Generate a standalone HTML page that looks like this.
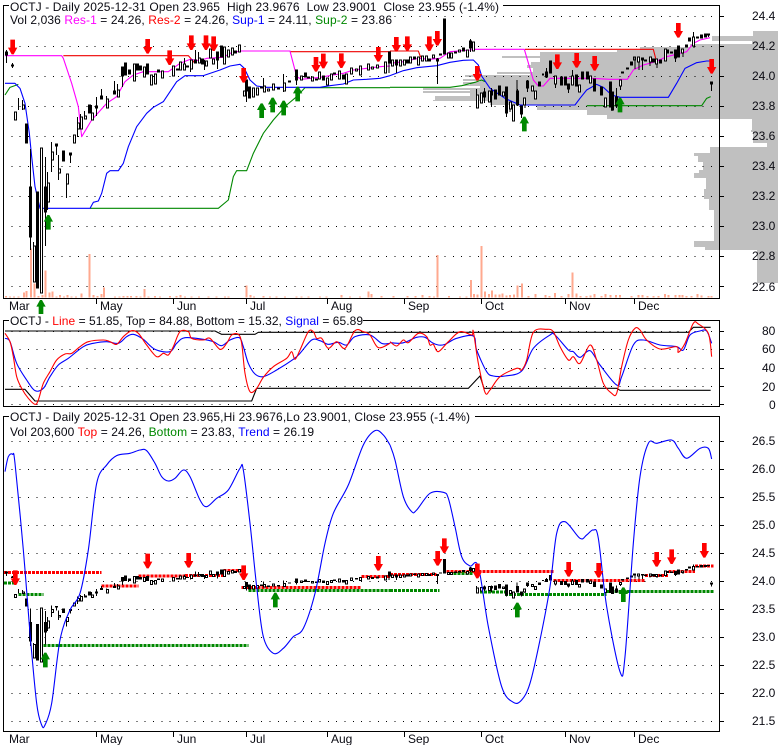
<!DOCTYPE html>
<html><head><meta charset="utf-8"><title>OCTJ</title>
<style>html,body{margin:0;padding:0;background:#fff;width:780px;height:745px;overflow:hidden}
svg{display:block}
text{font-family:"Liberation Sans",Arial,sans-serif;font-size:12px;fill:#0a0a12;white-space:pre}
.d{stroke:#000;stroke-width:1;stroke-dasharray:1 7.33;fill:none}
.l{fill:none;stroke-width:3.3;stroke-linejoin:round}
.ds{fill:none;stroke-width:9;stroke-dasharray:9 3}
.c{vector-effect:non-scaling-stroke}
</style></head><body>
<svg width="780" height="745" viewBox="0 0 780 745" xmlns="http://www.w3.org/2000/svg">
<defs>
<path id="dn" d="M-3 0H3L14 -20H7V-44H-7V-20H-14Z" fill="#f00"/>
<path id="up" d="M-3 0H3L14 20H7V44H-7V20H-14Z" fill="#080"/>
<g id="candles" shape-rendering="crispEdges">
<path class="c" fill="#000" stroke="#000" stroke-width="1" d="M5.5 52h2V55h-2zM6.5 50V63M11.5 65h2V66h-2zM12.5 63V68M25.5 124h2V143h-2zM29.5 187h2V237h-2zM30.5 149V250M36.5 192h2V288h-2zM44.5 187h2V212h-2zM45.5 157V246M55.5 144h2V146h-2zM56.5 144V155M62.5 151h2V161h-2zM69.5 153h2V155h-2zM70.5 153V163M88.5 105h2V113h-2zM95.5 106h2V108h-2zM96.5 97V116M100.5 96h2V99h-2zM101.5 89V99M113.5 91h2V94h-2zM114.5 81V94M121.5 67h2V76h-2zM122.5 67V87M124.5 63h2V75h-2zM128.5 70h2V74h-2zM136.5 64h2V70h-2zM139.5 66h2V70h-2zM146.5 64h2V74h-2zM157.5 70h2V72h-2zM176.5 69h2V70h-2zM186.5 66h2V67h-2zM194.5 60h2V63h-2zM195.5 50V63M201.5 59h2V64h-2zM216.5 52h2V60h-2zM217.5 52V69M220.5 46h2V57h-2zM234.5 51h2V53h-2zM245.5 80h2V91h-2zM246.5 80V102M248.5 87h2V98h-2zM260.5 87h2V88h-2zM277.5 88h2V89h-2zM288.5 81h2V82h-2zM295.5 70h2V80h-2zM296.5 70V85M304.5 73h2V77h-2zM307.5 77h2V78h-2zM315.5 79h2V80h-2zM322.5 76h2V80h-2zM333.5 73h2V74h-2zM342.5 75h2V79h-2zM388.5 52h2V63h-2zM395.5 60h2V65h-2zM396.5 60V73M406.5 60h2V63h-2zM413.5 57h2V59h-2zM428.5 59h2V61h-2zM436.5 59h2V61h-2zM437.5 58V84M439.5 54h2V55h-2zM443.5 19h2V54h-2zM454.5 52h2V53h-2zM462.5 48h2V51h-2zM469.5 41h2V48h-2zM470.5 39V52M483.5 92h2V97h-2zM484.5 88V103M490.5 91h2V95h-2zM491.5 88V107M494.5 90h2V99h-2zM498.5 86h2V95h-2zM505.5 87h2V113h-2zM506.5 87V117M516.5 91h2V105h-2zM517.5 89V106M520.5 106h2V114h-2zM521.5 106V118M526.5 81h2V88h-2zM527.5 80V92M538.5 82h2V86h-2zM542.5 74h1V75h-1zM545.5 72h2V77h-2zM546.5 68V78M549.5 61h2V73h-2zM560.5 77h2V85h-2zM564.5 77h2V85h-2zM567.5 84h2V89h-2zM568.5 84V93M575.5 75h2V86h-2zM581.5 72h2V79h-2zM586.5 72h2V79h-2zM593.5 79h2V91h-2zM600.5 87h2V95h-2zM609.5 82h2V107h-2zM611.5 92h2V110h-2zM615.5 97h2V106h-2zM616.5 88V108M621.5 72h2V73h-2zM626.5 68h2V69h-2zM630.5 62h2V65h-2zM641.5 58h2V60h-2zM642.5 58V70M644.5 60h2V61h-2zM652.5 59h2V62h-2zM659.5 60h2V63h-2zM666.5 50h2V53h-2zM670.5 52h2V53h-2zM674.5 50h2V58h-2zM675.5 50V62M677.5 46h2V57h-2zM685.5 45h2V47h-2zM688.5 38h2V41h-2zM696.5 37h2V38h-2zM700.5 35h2V38h-2zM704.5 34h2V37h-2zM708.5 34V37M707.5 34h2V35h-2zM710.5 82h2V84h-2zM711.5 82V91"/>
<path class="c" fill="none" stroke="#000" stroke-width="1" d="M22.5 100V110M18.5 98V110M33.5 242V246M47.5 172V183M47.5 202V210M51.5 142V152M51.5 160V172M58.5 155V169M58.5 173V180M66.5 184V198M77.5 117V123M77.5 129V137M80.5 114V117M84.5 111V116M91.5 105V113M106.5 96V99M117.5 84V90M154.5 74V84M184.5 58V70M190.5 64V72M198.5 52V58M204.5 60V70M263.5 78V86M283.5 74V83M283.5 91V92M389 52V73"/>
<path class="c" fill="#fff" stroke="#000" stroke-width="1" d="M14.5 112h2V120h-2zM22.5 105h2V109h-2zM33.5 246h2V282h-2zM40.5 148h2V293h-2zM47.5 183h2V202h-2zM51.5 152h2V160h-2zM58.5 169h2V173h-2zM66.5 174h2V184h-2zM73.5 135h2V143h-2zM77.5 123h2V129h-2zM80.5 117h2V129h-2zM84.5 116h2V119h-2zM91.5 113h2V120h-2zM106.5 99h2V108h-2zM117.5 90h2V97h-2zM133.5 64h2V81h-2zM143.5 67h2V77h-2zM150.5 75h2V85h-2zM154.5 74h2V84h-2zM161.5 71h2V78h-2zM172.5 66h2V76h-2zM179.5 62h2V70h-2zM183.5 64h2V70h-2zM190.5 60h2V69h-2zM198.5 58h2V63h-2zM205.5 61h2V66h-2zM209.5 49h2V58h-2zM212.5 59h2V64h-2zM223.5 47h2V64h-2zM227.5 50h2V57h-2zM231.5 48h2V55h-2zM238.5 45h2V52h-2zM243.5 91h2V96h-2zM252.5 88h2V97h-2zM256.5 88h2V95h-2zM263.5 86h2V92h-2zM267.5 89h2V91h-2zM272.5 84h2V90h-2zM283.5 83h2V91h-2zM300.5 76h2V80h-2zM311.5 77h2V81h-2zM318.5 72h2V79h-2zM326.5 78h2V85h-2zM330.5 74h2V80h-2zM338.5 71h2V79h-2zM345.5 74h2V84h-2zM350.5 68h2V74h-2zM355.5 69h2V71h-2zM359.5 66h2V75h-2zM367.5 64h2V70h-2zM371.5 67h2V69h-2zM376.5 65h2V68h-2zM384.5 62h2V73h-2zM391.5 60h2V66h-2zM399.5 60h2V66h-2zM403.5 60h2V65h-2zM409.5 57h2V63h-2zM417.5 57h2V65h-2zM421.5 56h2V61h-2zM425.5 56h2V61h-2zM432.5 55h2V58h-2zM447.5 53h2V58h-2zM450.5 53h2V58h-2zM458.5 50h2V52h-2zM466.5 50h2V57h-2zM472.5 42h2V51h-2zM476.5 95h2V108h-2zM480.5 93h2V103h-2zM488.5 91h2V102h-2zM502.5 92h2V96h-2zM509.5 102h2V109h-2zM512.5 105h2V121h-2zM523.5 98h2V105h-2zM531.5 86h2V91h-2zM534.5 91h2V99h-2zM554.5 76h2V84h-2zM571.5 76h2V85h-2zM578.5 85h2V92h-2zM589.5 76h2V83h-2zM604.5 98h2V107h-2zM619.5 80h2V86h-2zM633.5 57h2V60h-2zM637.5 57h2V62h-2zM649.5 57h2V62h-2zM655.5 59h2V64h-2zM664.5 49h2V61h-2zM681.5 49h2V53h-2zM692.5 37h2V46h-2z"/>
<path class="c" fill="none" stroke="#000" stroke-width="1" d="M476.5 89V95M555.5 84V88M572.5 70V76M620.5 86V90M635 57V69M639 62V70M650 62V66M657 64V68M683 53V57M693.5 32V37M694 46V48M612 110V111M525 105V108M510 109V112M517 80V91"/>
</g>
</defs>

<!-- CHART 1 profile -->
<g fill="#c0c0c0" shape-rendering="crispEdges">
<rect x="753" y="31" width="25" height="5"/><rect x="712" y="36" width="66" height="5"/><rect x="752" y="41" width="26" height="3"/><rect x="690" y="44" width="88" height="3"/><rect x="640" y="47" width="138" height="3"/><rect x="617" y="50" width="161" height="2"/><rect x="540" y="52" width="238" height="4"/><rect x="502" y="56" width="276" height="2"/><rect x="540" y="58" width="238" height="4"/><rect x="531" y="62" width="247" height="3"/><rect x="527" y="65" width="251" height="3"/><rect x="533" y="68" width="245" height="4"/><rect x="497" y="72" width="281" height="2"/><rect x="530" y="74" width="248" height="1"/><rect x="465" y="75" width="313" height="2"/><rect x="480" y="77" width="298" height="2"/><rect x="463" y="79" width="315" height="2"/><rect x="480" y="81" width="298" height="1"/><rect x="463" y="82" width="315" height="2"/><rect x="470" y="84" width="308" height="1"/><rect x="463" y="85" width="315" height="1"/><rect x="480" y="86" width="298" height="2"/><rect x="423" y="88" width="355" height="2"/><rect x="470" y="90" width="308" height="1"/><rect x="423" y="91" width="355" height="2"/><rect x="470" y="93" width="308" height="3"/><rect x="435" y="96" width="343" height="4"/><rect x="433" y="100" width="345" height="1"/><rect x="490" y="101" width="288" height="4"/><rect x="537" y="105" width="241" height="5"/><rect x="587" y="110" width="191" height="5"/><rect x="607" y="115" width="171" height="4"/>
<rect x="752" y="119" width="26" height="11"/><rect x="751" y="130" width="27" height="2"/><rect x="753" y="132" width="25" height="11"/><rect x="767" y="143" width="11" height="4"/>
<rect x="710" y="147" width="68" height="6"/><rect x="694" y="153" width="84" height="3"/><rect x="698" y="156" width="80" height="6"/><rect x="703" y="162" width="75" height="8"/><rect x="699" y="170" width="79" height="3"/><rect x="694" y="173" width="84" height="5"/><rect x="706" y="178" width="72" height="11"/><rect x="704" y="189" width="74" height="10"/><rect x="709" y="199" width="69" height="11"/><rect x="714" y="210" width="64" height="31"/><rect x="694" y="241" width="84" height="6"/><rect x="705" y="247" width="73" height="3"/><rect x="757" y="250" width="21" height="33"/>
</g>
<g class="d" shape-rendering="crispEdges">
<path d="M3 16.5H720M3 46.5H720M3 76.5H720M3 106.5H720M3 136.5H720M3 166.5H720M3 196.5H720M3 226.5H720M3 256.5H720M3 286.5H720M3 331.5H720M3 349.5H720M3 368.5H720M3 386.5H720M3 404.5H720M3 441.5H720M3 469.5H720M3 497.5H720M3 525.5H720M3 553.5H720M3 581.5H720M3 609.5H720M3 637.5H720M3 665.5H720M3 693.5H720M3 721.5H720"/>
</g>
<!-- volume -->
<g transform="scale(.33333)" fill="none" stroke="#ffa98f" stroke-width="6" shape-rendering="crispEdges">
<path d="M18 888V893M30 890V893M42 890V893M55 890V893M72 878V893M80 873V893M93 745V893M103 850V893M115 888V893M127 885V893M137 812V893M148 878V893M158 875V893M170 890V893M180 885V893M192 890V893M203 885V893M215 890V893M228 890V893M245 880V893M268 762V893M280 885V893M293 888V893M305 882V893M312 862V893M345 890V893M358 890V893M370 888V893M382 888V893M393 888V893M410 888V893M422 890V893M434 867V893M445 890V893M465 888V893M480 890V893M510 888V893M530 888V893M542 885V893M555 890V893M575 890V893M597 890V893M625 890V893M650 890V893M675 890V893M685 890V893M740 857V893M752 885V893M762 890V893M790 888V893M810 890V893M830 890V893M855 890V893M890 890V893M905 890V893M925 890V893M960 890V893M980 890V893M1025 885V893M1050 890V893M1080 890V893M1105 875V893M1115 882V893M1145 888V893"/>
</g>
<g transform="translate(390,0) scale(.33333)" fill="none" stroke="#ffa98f" stroke-width="6" shape-rendering="crispEdges">
<path d="M10 888V893M52 888V893M77 888V893M98 885V893M118 888V893M132 890V893M143 765V893M177 888V893M210 890V893M230 890V893M243 840V893M252 882V893M262 884V893M275 738V893M285 875V893M297 882V893M306 872V893M317 884V893M328 884V893M338 880V893M350 887V893M360 885V893M372 883V893M383 857V893M396 850V893M415 888V893M437 882V893M466 885V893M478 888V893M495 879V893M515 888V893M536 882V893M548 817V893M560 880V893M572 888V893M590 888V893M602 886V893M614 882V893M635 888V893M647 882V893M662 885V893M678 885V893M690 885V893M725 888V893M745 885V893M758 885V893M772 888V893M790 888V893M805 888V893M825 882V893M835 885V893M857 885V893M868 885V893M878 885V893M890 888V893M905 888V893M923 882V893M935 887V893M955 888V893M965 888V893"/>
</g>
<!-- lines chart 1 left -->
<g transform="scale(.33333)">
<path class="l" stroke="#e00" d="M190 167H565L585 190"/>
<path class="l" stroke="#e00" d="M870 155H1170"/>
<path class="l" stroke="#f0f" d="M15 167H185L190 175L215 250L235 320L245 410L275 360L320 310L350 290L375 245L400 225L430 215H505L540 190L570 178L600 182L620 175L670 172L690 160L720 153H870L890 230L905 238L960 232L1000 225L1030 220L1060 210L1100 205L1140 200L1170 198"/>
<path class="l" stroke="#080" d="M15 285L30 262L55 253M270 625H655L685 600L700 530L710 512H740L760 460L790 400L820 360L860 315L890 290L915 263H1170"/>
<path class="l" stroke="#00f" d="M15 250H45L60 265L75 310L88 400L95 470L105 560L120 625H270L280 607L295 603L305 580L320 520L330 512H355L370 490L385 440L410 380L440 340L460 322L490 305L530 245L555 227H610L660 210L690 198L720 193L733 205L750 240L770 258L800 262H960L990 257L1030 252L1060 240L1100 238L1140 235L1170 227"/>
</g>
<g transform="translate(390,0) scale(.33333)">
<path class="l" stroke="#e00" d="M0 153H85L92 172M405 148H790L797 175"/>
<path class="l" stroke="#f0f" d="M0 190L40 185L85 175L120 178L150 175L180 155L240 150L255 148H403L430 240L445 258H460L480 235H600L660 238H712L730 210L760 195L797 185L830 170L890 155L910 130L930 120L960 113"/>
<path class="l" stroke="#080" d="M0 262H180L215 257L255 247L275 240L285 245M590 317H935L950 295L962 290"/>
<path class="l" stroke="#00f" d="M0 227L40 212L80 203L140 197L180 187L220 181L250 180L265 195L275 228L300 265L345 295L390 315H555L570 295L590 270L620 253L640 262L665 285L690 292H835L860 250L885 205L920 188L950 183H965"/>
</g>
<use href="#candles"/>
<!-- arrows chart 1 -->
<g transform="scale(.33333)">
<use href="#dn" x="38" y="163"/><use href="#dn" x="443" y="161"/><use href="#dn" x="509" y="195"/><use href="#dn" x="574" y="150"/><use href="#dn" x="618" y="150"/><use href="#dn" x="641" y="153"/><use href="#dn" x="731" y="248"/><use href="#dn" x="948" y="215"/><use href="#dn" x="970" y="205"/><use href="#dn" x="1024" y="204"/><use href="#dn" x="1135" y="185"/>
<use href="#up" x="145" y="645"/><use href="#up" x="785" y="310"/><use href="#up" x="818" y="293"/><use href="#up" x="851" y="302"/><use href="#up" x="893" y="260"/><use href="#up" x="123" y="900"/>
</g>
<g transform="translate(390,0) scale(.33333)">
<use href="#dn" x="19" y="155"/><use href="#dn" x="52" y="153"/><use href="#dn" x="118" y="153"/><use href="#dn" x="142" y="137"/><use href="#dn" x="262" y="242"/><use href="#dn" x="502" y="207"/><use href="#dn" x="560" y="203"/><use href="#dn" x="614" y="212"/><use href="#dn" x="865" y="113"/><use href="#dn" x="965" y="221"/>
<use href="#up" x="403" y="350"/><use href="#up" x="690" y="293"/>
</g>

<!-- CHART 2 lines -->
<g transform="translate(0,300) scale(.33333)">
<path class="l" stroke="#000" d="M15 93H645L665 103H765L775 97H1170M15 268H75L105 303H755L770 265H1170"/>
<path class="l s" stroke="#00f" d="M15 115L30 125L50 190L80 240L105 272L130 265L150 230L175 195L205 175L250 140L280 130L320 125L355 130L380 110L400 103L430 118L465 148L510 155L530 130L555 113L610 118L640 125L665 137L690 120L718 113L730 140L745 190L765 222L790 230L830 210L880 178L900 160L935 120L960 122L985 133L1015 127L1040 135L1065 110L1110 105L1145 130L1170 130"/>
<path class="l s" stroke="#f00" d="M15 100L30 125L40 170L50 230L65 265L85 295L105 313L115 300L130 250L150 215L170 180L195 162L215 160L240 140L265 125L310 120L330 125L350 133L370 110L395 92L415 100L440 135L470 170L490 160L505 165L520 140L540 95L565 95L575 115L610 120L630 115L660 148L680 130L695 105L715 103L725 130L735 220L750 275L770 265L790 232L820 200L860 175L875 155L885 178L900 150L925 95L940 95L950 115L965 115L985 145L1010 125L1035 145L1065 92L1090 95L1110 105L1135 143L1170 130"/>
</g>
<g transform="translate(390,300) scale(.33333)">
<path class="l" stroke="#000" d="M0 97H895L910 82H962M0 265H235L270 228L282 265H680L690 271H962"/>
<path class="l s" stroke="#00f" d="M0 128L30 130L50 125L80 112L105 112L125 127L145 135L165 133L200 115L250 108L260 150L290 215L310 228L345 228L395 213L430 145L480 105L495 105L535 150L550 155L570 172L600 152L630 195L680 255L695 230L730 135L760 120L810 135L860 140L880 150L900 105L930 93L950 93L965 130"/>
<path class="l s" stroke="#f00" d="M0 125L20 138L40 120L55 128L85 100L110 110L120 135L130 133L145 155L175 125L210 95L245 105L250 95L265 190L285 277L300 270L330 230L380 205L395 210L410 180L430 97L470 88L490 95L510 140L535 180L550 170L570 190L600 135L620 180L640 250L665 280L680 280L695 200L715 120L735 85L750 90L770 120L810 147L860 140L865 157L885 130L910 70L925 72L955 100L965 170"/>
</g>

<!-- CHART 3 -->
<g transform="translate(0,410) scale(.33333)" shape-rendering="crispEdges">
<path class="ds" stroke="#f00" d="M12 487H305M305 528H415M415 498H555M555 496H670M670 481H725M725 533H1085M1085 500H1170"/>
<path class="ds" stroke="#080" d="M12 519H50M55 553H130M130 706H745M745 541H1170"/>
</g>
<g transform="translate(390,410) scale(.33333)" shape-rendering="crispEdges">
<path class="ds" stroke="#f00" d="M0 494H140M170 484H490M490 511H765M765 496H835M835 484H915M915 468H970"/>
<path class="ds" stroke="#080" d="M0 541H148M190 490H250M270 546H345M345 553H650M650 544H970"/>
</g>
<use href="#candles" transform="matrix(1 0 0 .3733 0 552.63)"/>
<g transform="translate(0,410) scale(.33333)">
<path class="l s" stroke="#00f" d="M15 185L25 140L38 133L45 160L70 420L90 670L110 880L125 945L135 945L155 880L180 690L210 600L240 550L265 420L290 220L320 165L350 137L390 130L420 120L440 122L465 160L485 200L505 213L525 205L550 180L570 200L600 270L620 290L650 265L685 240L720 175L730 180L750 340L770 530L790 680L820 730L850 715L880 680L910 655L945 550L975 400L1000 310L1045 225L1090 105L1125 62L1150 75L1170 105"/>
<use href="#dn" x="46" y="525"/><use href="#dn" x="443" y="475"/><use href="#dn" x="566" y="473"/><use href="#dn" x="731" y="510"/><use href="#dn" x="1135" y="482"/>
<use href="#up" x="136" y="728"/><use href="#up" x="826" y="548"/>
</g>
<g transform="translate(390,410) scale(.33333)">
<path class="l s" stroke="#00f" d="M0 105L15 150L40 260L65 305L80 300L120 250L160 247L175 265L195 350L215 440L240 468L265 470L295 650L335 830L370 877L395 870L420 820L450 690L480 530L500 370L525 335L570 385L590 375L610 360L625 385L650 590L690 785L705 740L730 400L750 200L775 100L800 100L845 90L865 115L890 145L930 115L955 115L965 147"/>
<use href="#dn" x="143" y="467"/><use href="#dn" x="163" y="429"/><use href="#dn" x="262" y="505"/><use href="#dn" x="536" y="500"/><use href="#dn" x="626" y="503"/><use href="#dn" x="800" y="470"/><use href="#dn" x="845" y="462"/><use href="#dn" x="943" y="443"/>
<use href="#up" x="382" y="578"/><use href="#up" x="700" y="532"/>
</g>

<!-- frames -->
<g fill="none" stroke="#000" stroke-width="1" shape-rendering="crispEdges">
<path d="M3.5 5.5H719.5V298.5H3.5Z"/>
<path d="M3.5 320.5H719.5V406.5H3.5Z"/>
<path d="M3.5 416.5H719.5V731.5H3.5Z"/>
<path d="M96.5 298V304M173.5 298V304M246.5 298V304M327.5 298V304M404.5 298V304M481.5 298V304M565.5 298V304M634.5 298V304"/>
<path d="M96.5 731V737M173.5 731V737M246.5 731V737M327.5 731V737M404.5 731V737M481.5 731V737M565.5 731V737M634.5 731V737"/>
<path d="M719 16.5H724M719 46.5H724M719 76.5H724M719 106.5H724M719 136.5H724M719 166.5H724M719 196.5H724M719 226.5H724M719 256.5H724M719 286.5H724"/>
<path d="M719 331.5H724M719 349.5H724M719 368.5H724M719 386.5H724M719 404.5H724"/>
<path d="M719 441.5H724M719 469.5H724M719 497.5H724M719 525.5H724M719 553.5H724M719 581.5H724M719 609.5H724M719 637.5H724M719 665.5H724M719 693.5H724M719 721.5H724"/>
</g>

<!-- header backgrounds -->
<rect x="9" y="0" width="494" height="13" fill="#fff"/>
<rect x="9" y="13" width="385" height="13" fill="#fff"/>
<rect x="9" y="314" width="354" height="12" fill="#fff"/>
<rect x="9" y="410" width="466" height="13" fill="#fff"/>
<rect x="9" y="423" width="306" height="15" fill="#fff"/>

<!-- text -->
<text x="10" y="11" textLength="489">OCTJ - Daily 2025-12-31 Open 23.965  High 23.9676  Low 23.9001  Close 23.955 (-1.4%)</text>
<text x="10" y="24" textLength="382">Vol 2,036 <tspan style="fill:#f0f">Res-1</tspan> = 24.26, <tspan style="fill:#f00">Res-2</tspan> = 24.26, <tspan style="fill:#00f">Sup-1</tspan> = 24.11, <tspan style="fill:#080">Sup-2</tspan> = 23.86</text>
<text x="10" y="325" textLength="353">OCTJ - <tspan style="fill:#f00">Line</tspan> = 51.85, Top = 84.88, Bottom = 15.32, <tspan style="fill:#00f">Signal</tspan> = 65.89</text>
<text x="10" y="421" textLength="460">OCTJ - Daily 2025-12-31 Open 23.965,Hi 23.9676,Lo 23.9001, Close 23.955 (-1.4%)</text>
<text x="10" y="436" textLength="304">Vol 203,600 <tspan style="fill:#f00">Top</tspan> = 24.26, <tspan style="fill:#080">Bottom</tspan> = 23.83, <tspan style="fill:#00f">Trend</tspan> = 26.19</text>

<text x="9" y="310">Mar</text><text x="100" y="310">May</text><text x="177" y="310">Jun</text><text x="250" y="310">Jul</text><text x="331" y="310">Aug</text><text x="408" y="310">Sep</text><text x="485" y="310">Oct</text><text x="569" y="310">Nov</text><text x="638" y="310">Dec</text>
<text x="9" y="743">Mar</text><text x="100" y="743">May</text><text x="177" y="743">Jun</text><text x="250" y="743">Jul</text><text x="331" y="743">Aug</text><text x="408" y="743">Sep</text><text x="485" y="743">Oct</text><text x="569" y="743">Nov</text><text x="638" y="743">Dec</text>

<text x="752" y="20">24.4</text><text x="752" y="50">24.2</text><text x="752" y="80">24.0</text><text x="752" y="110">23.8</text><text x="752" y="140">23.6</text><text x="752" y="170">23.4</text><text x="752" y="200">23.2</text><text x="752" y="230">23.0</text><text x="752" y="260">22.8</text><text x="752" y="291">22.6</text>
<text x="762" y="335">80</text><text x="762" y="353">60</text><text x="762" y="372">40</text><text x="762" y="391">20</text><text x="769" y="409">0</text>
<text x="752" y="445">26.5</text><text x="752" y="473">26.0</text><text x="752" y="501">25.5</text><text x="752" y="529">25.0</text><text x="752" y="557">24.5</text><text x="752" y="585">24.0</text><text x="752" y="613">23.5</text><text x="752" y="641">23.0</text><text x="752" y="669">22.5</text><text x="752" y="697">22.0</text><text x="752" y="725">21.5</text>
</svg>
<script>
document.querySelectorAll('path.s').forEach(function(p){
  var n=p.getAttribute('d').match(/-?[\d.]+/g).map(Number),pts=[];
  for(var i=0;i<n.length;i+=2)pts.push([n[i],n[i+1]]);
  var d='M'+pts[0][0]+' '+pts[0][1];
  for(var j=0;j<pts.length-1;j++){
    var a=pts[Math.max(j-1,0)],b=pts[j],c=pts[j+1],e=pts[Math.min(j+2,pts.length-1)];
    d+='C'+(b[0]+(c[0]-a[0])/6)+' '+(b[1]+(c[1]-a[1])/6)+' '+(c[0]-(e[0]-b[0])/6)+' '+(c[1]-(e[1]-b[1])/6)+' '+c[0]+' '+c[1];
  }
  p.setAttribute('d',d);
});
</script>
</body></html>
